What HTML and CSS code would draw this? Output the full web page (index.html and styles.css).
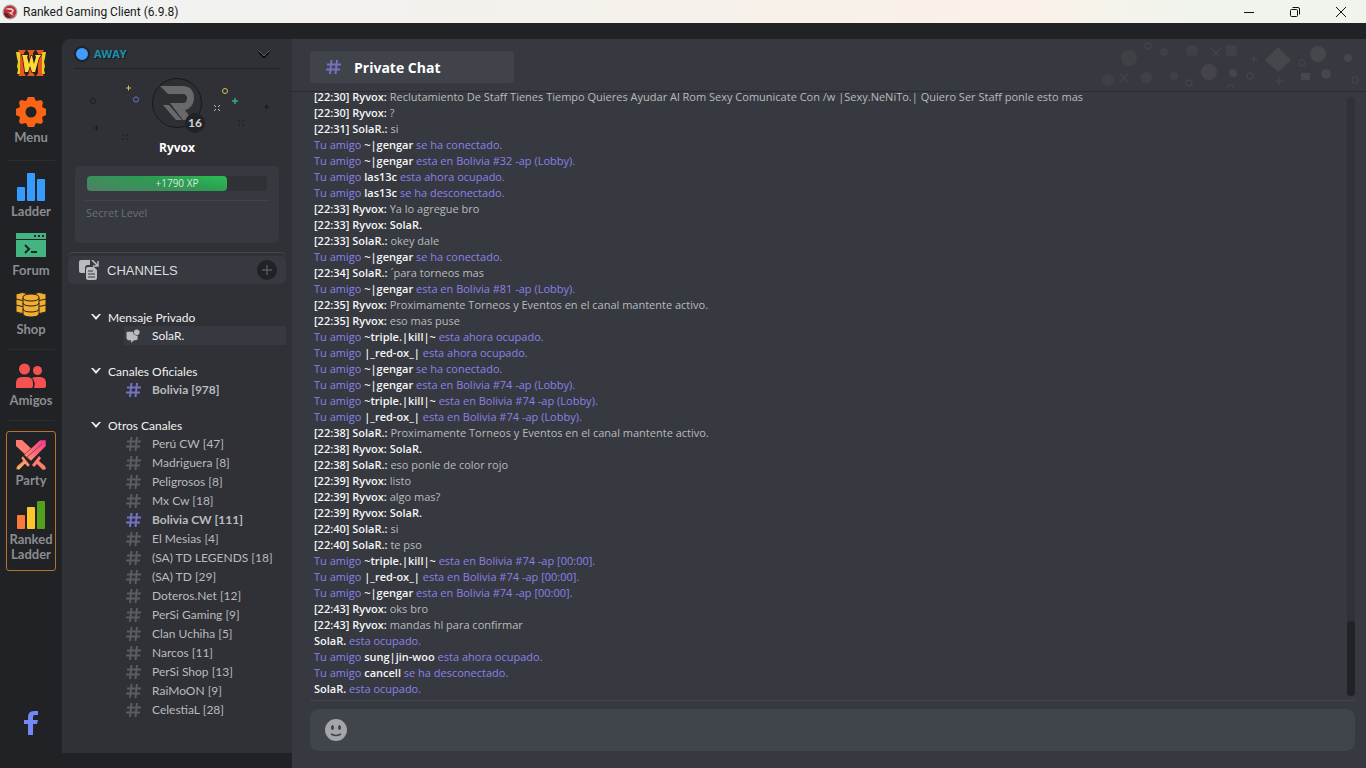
FILE: index.html
```html
<!DOCTYPE html>
<html lang="es">
<head>
    <meta charset="UTF-8">
    <meta name="viewport" content="width=device-width, initial-scale=1.0">
    <title>Ranked Gaming Client (6.9.8)</title>
    <link rel="stylesheet" href="styles.css">
</head>
<body>
    <!-- Icons used more than once -->
    <svg class="sprite" aria-hidden="true">
        <symbol id="hash" viewBox="0 0 15 14"><path d="M5.5 0 4 14M11 0 9.5 14M1 4.5h14M0 9.5h14" fill="none" stroke="currentColor" stroke-width="2"/></symbol>
        <symbol id="chevron" viewBox="0 0 10 6"><path d="M0 0h2l3 3 3-3h2L5 6z" fill="currentColor"/></symbol>
    </svg>

    <header class="titlebar">
        <svg class="app-icon" viewBox="0 0 16 16"><circle cx="8" cy="8" r="7.5" fill="#a9a3a3"/><circle cx="8" cy="8" r="6.2" fill="#b92f35"/><path d="M3 5q5-2 8 0 2 2-1 4l2 3-5-3H5l4-1c2-1 1-2-1-2z" fill="#e9c9c9"/><path d="M2 9c0 4 4 5.5 7 5L5 9z" fill="#5d2327"/></svg>
        <h1>Ranked Gaming Client (6.9.8)</h1>
        <div class="window-buttons">
            <button aria-label="Minimize"><svg viewBox="0 0 10 10"><path d="M0 5.5h10"/></svg></button>
            <button aria-label="Restore"><svg viewBox="0 0 10 10"><rect x=".5" y="2.5" width="7" height="7" rx="1"/><path d="M2.5.5H8q1.5 0 1.5 1.5v5.5"/></svg></button>
            <button aria-label="Close"><svg viewBox="0 0 10 10"><path d="m0 0 10 10M10 0 0 10"/></svg></button>
        </div>
    </header>

    <div class="app">
        <!-- Left rail -->
        <nav class="rail">
            <a href="#" class="logo" aria-label="Warcraft III">
                <svg viewBox="0 0 30 28"><path d="M0 3h5v22H1l1-4-1-4 1-4-1-4zM30 3h-5v22h4l-1-4 1-4-1-4 1-4z" fill="#e8cf22"/><path d="M2 1h8L8 4v20l2 3H2l2-3V4zM11 1h8l-2 3v20l2 3h-8l2-3V4zM20 1h8l-2 3v20l2 3h-8l2-3V4z" fill="#e65a1b"/><path d="M6 6h6l-1 2 2 7 2-8h1l2 8 2-7-1-2h6l-2 3-4 14h-3l-2-6-2 6H9L7 9z" fill="#ffd93a" stroke="#2c2014" stroke-width="1.5" paint-order="stroke"/></svg>
            </a>
            <a href="#" class="rail-item menu-item">
                <svg viewBox="0 0 30 30"><path d="M12 0h6l2 4 5-1 2 2-1 5 4 2v6l-4 2 1 5-2 2-5-1-2 4h-6l-2-4-5 1-2-2 1-5-4-2v-6l4-2-1-5 2-2 5 1z" fill="#fb6415"/><circle cx="15" cy="15" r="5.5" fill="#202226"/></svg>
                Menu
            </a>
            <hr>
            <a href="#" class="rail-item">
                <svg viewBox="0 0 30 30"><g fill="#359cff"><rect x="1" y="16" width="8" height="14" rx="1"/><rect x="11" y="2" width="8" height="28" rx="1"/><rect x="21" y="8" width="8" height="22" rx="1"/></g></svg>
                Ladder
            </a>
            <a href="#" class="rail-item">
                <svg viewBox="0 0 30 30"><path d="M0 3h30v6H0zM0 10h30v17H0z" fill="#43b581"/><path d="M18 5h2v2h-2zM22 5h2v2h-2zM26 5h2v2h-2z" fill="#202226"/><path d="m9 15 4 4-4 4M15 22h6" fill="none" stroke="#202226" stroke-width="2"/></svg>
                Forum
            </a>
            <a href="#" class="rail-item">
                <svg viewBox="0 0 30 30"><g fill="#f2ae2c" stroke="#202226"><path d="M0 5q6-3 13 0v18q-7 3-13 0zM17 5q6-3 13 0v18q-7 3-13 0z"/><path d="M0 10q6 3 13 0M0 16q6 3 13 0M17 10q6 3 13 0M17 16q6 3 13 0" fill="none"/><path d="M7 8c0-4 16-4 16 0v17c0 4-16 4-16 0z"/><path d="M7 9c0 4 16 4 16 0M7 14c0 4 16 4 16 0M7 20c0 4 16 4 16 0" fill="none"/></g></svg>
                Shop
            </a>
            <hr>
            <a href="#" class="rail-item">
                <svg viewBox="0 0 30 30"><g fill="#f45151"><circle cx="8.5" cy="9" r="5.5"/><circle cx="21.5" cy="10.5" r="4.5"/><path d="M0 28v-5q0-6 6-6h5q6 0 6 6v3q0 2-2 2zM18 28q2-6-2-10 2-1 4-1h4q6 0 6 6v3q0 2-2 2z"/></g></svg>
                Amigos
            </a>
            <hr>
            <div class="ranked-box">
                <a href="#" class="rail-item">
                    <svg viewBox="0 0 30 30">
                        <defs><linearGradient id="blade" x1="0" y1="1" x2="1" y2="0"><stop offset="0" stop-color="#ffb35c"/><stop offset=".5" stop-color="#ff7b73"/><stop offset="1" stop-color="#f8358f"/></linearGradient></defs>
                        <path d="M0 0h6l15 14-6 6L0 6zM23 16l2 2-2 3 6 5 1 3-3 1-6-6-3 3-2-2z" fill="#ff7b70"/>
                        <path d="M30 0h-6L8 15l7 6L30 6zM7 16l-2 2 2 3-6 5-1 3 3 1 6-6 3 3 2-2z" fill="url(#blade)" stroke="#202226" stroke-width=".5"/>
                        <path d="m11 17 15-13" stroke="#9b3b58"/>
                    </svg>
                    Party
                </a>
                <a href="#" class="rail-item">
                    <svg viewBox="0 0 30 30"><rect x="1" y="16" width="8" height="14" rx="1" fill="#fb7a38"/><rect x="11" y="8" width="8" height="22" rx="1" fill="#fcc52c"/><rect x="21" y="2" width="8" height="28" rx="1" fill="#51a11d"/></svg>
                    Ranked<br>Ladder
                </a>
            </div>
            <a href="#" class="facebook" aria-label="Facebook">
                <svg viewBox="0 0 14 24"><path d="M14 0v4h-3q-2 0-2 2v3h5l-1 4H9v11H4V13H0V9h4V6q0-6 6-6z" fill="#7387f5"/></svg>
            </a>
        </nav>

        <!-- Profile and channels -->
        <aside class="sidebar">
            <button class="status">
                <span class="status-dot"></span>AWAY
                <svg viewBox="0 0 12 8"><path d="m1 2 5 5 5-5" fill="none" stroke="#08090a" stroke-width="2"/><path d="m1 1 5 5 5-5" fill="none" stroke="#65686c"/></svg>
            </button>
            <section class="profile">
                <div class="profile-art">
                    <svg class="confetti" viewBox="0 0 210 70" fill="none">
                        <g stroke="#191b1e"><circle cx="21" cy="32" r="2.5"/><path d="M22 59h5M24.5 56.5v5M192 38h5M194.5 35.5v5M50 65l2 2m2 2 2 2m0-6-2 2m-2 2-2 2M166 51l2 2m2 2 2 2m0-6-2 2m-2 2-2 2"/></g>
                        <path d="M54 19h5M56.5 16.5v5" stroke="#d4c34d"/><circle cx="64" cy="30.5" r="2.5" stroke="#6d78d0"/><circle cx="153" cy="22" r="2.500" stroke="#d4c34d"/><path d="M160 32h6M163 29v6" stroke="#38a985" stroke-width="1.5"/><path d="m142 36 2 2m2 2 2 2m0-6-2 2m-2 2-2 2" stroke="#b8bbc0"/>
                    </svg>
                    <div class="avatar">
                        <svg viewBox="0 0 50 50"><circle cx="25" cy="25" r="24.5" fill="#2d2f33" stroke="#17191b"/><path d="M8 8h24q10 1 10 13-1 9-9 11l7 10h-9L18 25h13q4 0 4-5 0-4-5-4H16zM11 27h6l13 15h-6z" fill="#67696c"/></svg>
                        <span class="level">16</span>
                    </div>
                </div>
                <h2>Ryvox</h2>
                <div class="xp-card">
                    <div class="xp-track"><div class="xp-fill"></div><span>+1790 XP</span></div>
                    <p>Secret Level</p>
                </div>
            </section>

            <div class="channels-head">
                <svg viewBox="0 0 20 20"><path d="M2 0h9v5H9q-3 0-3 3v5H2q-2 0-2-2V2q0-2 2-2z" fill="#b9bbbe"/><path d="M9 7h6l3 3v8q0 2-2 2H9q-2 0-2-2V9q0-2 2-2z" fill="#b9bbbe"/><path d="M9 11h5M9 14h7M9 17h7" stroke="#36393f"/><path d="m13 0 5 5m1-4v5h-5" fill="none" stroke="#b9bbbe" stroke-width="1.5"/></svg>
                <h2>CHANNELS</h2>
                <button aria-label="Add channel"><svg viewBox="0 0 10 10"><path d="M5 0v10M0 5h10" stroke="#54575c" stroke-width="1.5"/></svg></button>
            </div>

            <div class="channel-groups">
                <section>
                    <h3><svg><use href="#chevron"/></svg>Mensaje Privado</h3>
                    <ul>
                        <li><a href="#" class="selected"><svg viewBox="0 0 15 15"><path d="M1 3h6a4 4 0 0 0 5 4v3q0 2-2 2H8l-3 3v-3H3q-3 0-3-3V4q0-1 1-1z" fill="#b9bbbe"/><circle cx="11" cy="3.5" r="3" fill="#b9bbbe"/></svg>SolaR.</a></li>
                    </ul>
                </section>
                <section>
                    <h3><svg><use href="#chevron"/></svg>Canales Oficiales</h3>
                    <ul>
                        <li><a href="#" class="unread"><svg><use href="#hash"/></svg>Bolivia [978]</a></li>
                    </ul>
                </section>
                <section>
                    <h3><svg><use href="#chevron"/></svg>Otros Canales</h3>
                    <ul>
                        <li><a href="#"><svg><use href="#hash"/></svg>Perú CW [47]</a></li>
                        <li><a href="#"><svg><use href="#hash"/></svg>Madriguera [8]</a></li>
                        <li><a href="#"><svg><use href="#hash"/></svg>Peligrosos [8]</a></li>
                        <li><a href="#"><svg><use href="#hash"/></svg>Mx Cw [18]</a></li>
                        <li><a href="#" class="unread"><svg><use href="#hash"/></svg>Bolivia CW [111]</a></li>
                        <li><a href="#"><svg><use href="#hash"/></svg>El Mesias [4]</a></li>
                        <li><a href="#"><svg><use href="#hash"/></svg>(SA) TD LEGENDS [18]</a></li>
                        <li><a href="#"><svg><use href="#hash"/></svg>(SA) TD [29]</a></li>
                        <li><a href="#"><svg><use href="#hash"/></svg>Doteros.Net [12]</a></li>
                        <li><a href="#"><svg><use href="#hash"/></svg>PerSi Gaming [9]</a></li>
                        <li><a href="#"><svg><use href="#hash"/></svg>Clan Uchiha [5]</a></li>
                        <li><a href="#"><svg><use href="#hash"/></svg>Narcos [11]</a></li>
                        <li><a href="#"><svg><use href="#hash"/></svg>PerSi Shop [13]</a></li>
                        <li><a href="#"><svg><use href="#hash"/></svg>RaiMoON [9]</a></li>
                        <li><a href="#"><svg><use href="#hash"/></svg>CelestiaL [28]</a></li>
                    </ul>
                </section>
            </div>
        </aside>

        <!-- Chat -->
        <main class="chat">
            <div class="chat-head">
                <div class="chat-title"><svg><use href="#hash"/></svg><h2>Private Chat</h2></div>
                <svg class="shapes" viewBox="0 0 266 52">
                    <g fill="#3f4147"><circle cx="29" cy="19" r="8"/><circle cx="8" cy="41" r="6"/><circle cx="46" cy="39" r="6"/><circle cx="64" cy="13" r="4"/><circle cx="92" cy="12" r="6"/><circle cx="74" cy="37" r="4"/><rect x="126" y="6" width="11" height="11" rx="2"/></g>
                    <g fill="#46474a"><circle cx="109" cy="33" r="8" fill="#45424b"/><circle cx="133" cy="34" r="4"/><path d="m178 8 13 13-13 12-13-12z"/><circle cx="218" cy="15" r="8"/><circle cx="226" cy="35" r="5"/><circle cx="248" cy="19" r="4"/><path d="M201 34h9v7h-9z"/></g>
                    <g fill="none" stroke="#414349" stroke-width="1.5"><path d="M150 20h8m-4-4v8M175 42h8m-4-4v8M112 10l8 8m0-8-8 8M20 35l8 8m0-8-8 8"/><circle cx="202" cy="24" r="3"/><circle cx="150" cy="37" r="3"/><circle cx="89" cy="44" r="3"/><circle cx="48" cy="7" r="3"/><circle cx="255" cy="41" r="3"/><path d="M127 49a3 3 0 0 1 6 0"/></g>
                </svg>
            </div>

            <div class="messages">
                <div class="log">
                    <p><b>[22:30] Ryvox:</b> Reclutamiento De Staff Tienes Tiempo Quieres Ayudar Al Rom Sexy Comunicate Con /w |Sexy.NeNiTo.| Quiero Ser Staff ponle esto mas</p>
                    <p><b>[22:30] Ryvox:</b> ?</p>
                    <p><b>[22:31] SolaR.:</b> si</p>
                    <p class="notice">Tu amigo <b>~|gengar</b> se ha conectado.</p>
                    <p class="notice">Tu amigo <b>~|gengar</b> esta en Bolivia #32 -ap (Lobby).</p>
                    <p class="notice">Tu amigo <b>las13c</b> esta ahora ocupado.</p>
                    <p class="notice">Tu amigo <b>las13c</b> se ha desconectado.</p>
                    <p><b>[22:33] Ryvox:</b> Ya lo agregue bro</p>
                    <p><b>[22:33] Ryvox: SolaR.</b></p>
                    <p><b>[22:33] SolaR.:</b> okey dale</p>
                    <p class="notice">Tu amigo <b>~|gengar</b> se ha conectado.</p>
                    <p><b>[22:34] SolaR.:</b> ´para torneos mas</p>
                    <p class="notice">Tu amigo <b>~|gengar</b> esta en Bolivia #81 -ap (Lobby).</p>
                    <p><b>[22:35] Ryvox:</b> Proximamente Torneos y Eventos en el canal mantente activo.</p>
                    <p><b>[22:35] Ryvox:</b> eso mas puse</p>
                    <p class="notice">Tu amigo <b>~triple.|kill|~</b> esta ahora ocupado.</p>
                    <p class="notice">Tu amigo <b>|_red-ox_|</b> esta ahora ocupado.</p>
                    <p class="notice">Tu amigo <b>~|gengar</b> se ha conectado.</p>
                    <p class="notice">Tu amigo <b>~|gengar</b> esta en Bolivia #74 -ap (Lobby).</p>
                    <p class="notice">Tu amigo <b>~triple.|kill|~</b> esta en Bolivia #74 -ap (Lobby).</p>
                    <p class="notice">Tu amigo <b>|_red-ox_|</b> esta en Bolivia #74 -ap (Lobby).</p>
                    <p><b>[22:38] SolaR.:</b> Proximamente Torneos y Eventos en el canal mantente activo.</p>
                    <p><b>[22:38] Ryvox: SolaR.</b></p>
                    <p><b>[22:38] SolaR.:</b> eso ponle de color rojo</p>
                    <p><b>[22:39] Ryvox:</b> listo</p>
                    <p><b>[22:39] Ryvox:</b> algo mas?</p>
                    <p><b>[22:39] Ryvox: SolaR.</b></p>
                    <p><b>[22:40] SolaR.:</b> si</p>
                    <p><b>[22:40] SolaR.:</b> te pso</p>
                    <p class="notice">Tu amigo <b>~triple.|kill|~</b> esta en Bolivia #74 -ap [00:00].</p>
                    <p class="notice">Tu amigo <b>|_red-ox_|</b> esta en Bolivia #74 -ap [00:00].</p>
                    <p class="notice">Tu amigo <b>~|gengar</b> esta en Bolivia #74 -ap [00:00].</p>
                    <p><b>[22:43] Ryvox:</b> oks bro</p>
                    <p><b>[22:43] Ryvox:</b> mandas hl para confirmar</p>
                    <p class="notice"><b>SolaR.</b> esta ocupado.</p>
                    <p class="notice">Tu amigo <b>sung|jin-woo</b> esta ahora ocupado.</p>
                    <p class="notice">Tu amigo <b>cancell</b> se ha desconectado.</p>
                    <p class="notice"><b>SolaR.</b> esta ocupado.</p>
                </div>
                <div class="scrollbar"><div class="thumb"></div></div>
            </div>

            <form class="composer">
                <button type="button" aria-label="Emoji"><svg viewBox="0 0 22 22"><circle cx="11" cy="11" r="11" fill="#a3a5a8"/><ellipse cx="7.5" cy="8.5" rx="1.5" ry="2.5" fill="#40444b"/><ellipse cx="14.5" cy="8.5" rx="1.5" ry="2.5" fill="#40444b"/><path d="M6 15q5 3 10 0" fill="none" stroke="#40444b" stroke-width="1.5"/></svg></button>
                <input type="text" aria-label="Message">
            </form>
        </main>
    </div>
</body>
</html>
```
FILE: styles.css
```css
* {
    box-sizing: border-box;
}
body {
    margin: 0;
    height: 100vh;
    display: flex;
    flex-direction: column;
    overflow: hidden;
    background-color: #202226;
    color: #b9bbbe;
    font-family: "Open Sans", "Noto Sans", sans-serif;
    font-size: 11px;
}
h1, h2, h3, p, ul {
    margin: 0;
    padding: 0;
    list-style: none;
}
a {
    color: inherit;
    text-decoration: none;
}
button {
    padding: 0;
    border: none;
    background: none;
    color: inherit;
    font: inherit;
    cursor: pointer;
}
svg {
    display: block;
    flex: none;
}
.sprite {
    position: absolute;
    width: 0;
    height: 0;
}

/* Window title */
.titlebar {
    display: flex;
    align-items: center;
    height: 23px;
    flex: none;
    padding-left: 2px;
    background: linear-gradient(90deg, #f0f3f1, #f3f1ed 30%, #faf1e8 75%, #f0f4ed 88%);
    color: #191919;
}
.app-icon {
    width: 16px;
    height: 16px;
    margin-right: 5px;
}
.titlebar h1 {
    font-size: 12px;
    font-weight: 400;
    font-family: Roboto, sans-serif;
}
.window-buttons {
    display: flex;
    margin-left: auto;
    padding-right: 2px;
}
.window-buttons button {
    display: flex;
    align-items: center;
    justify-content: center;
    width: 46px;
    height: 20px;
}
.window-buttons svg {
    width: 10px;
    height: 10px;
    fill: none;
    stroke: #111;
}

.app {
    display: flex;
    flex: 1;
    min-height: 0;
    padding-top: 16px;
}

/* Left rail */
.rail {
    display: flex;
    flex-direction: column;
    align-items: center;
    width: 62px;
    flex: none;
    padding: 10px 6px 33px;
    font-family: Lato, sans-serif;
    font-size: 13px;
    font-weight: 700;
    line-height: 15px;
    color: #8b8d90;
    text-align: center;
}
.rail hr {
    width: 48px;
    margin: 1px 0 10px;
    border: none;
    border-top: 1px solid #2b2d31;
}
.logo svg {
    width: 30px;
    height: 28px;
}
.rail-item {
    display: flex;
    flex-direction: column;
    align-items: center;
    gap: 3px;
    margin-bottom: 11px;
}
.rail-item svg {
    width: 30px;
    height: 30px;
}
.menu-item {
    margin: 20px 0 14px;
}
.ranked-box {
    width: 50px;
    padding: 8px 0;
    border: 1px solid #b5732b;
    border-radius: 3px;
}
.ranked-box .rail-item:last-child {
    margin: 0;
}
.facebook {
    margin-top: auto;
}
.facebook svg {
    width: 14px;
    height: 24px;
}

/* Sidebar */
.sidebar {
    width: 230px;
    flex: none;
    margin-bottom: 15px;
    padding: 0 6px;
    background-color: #2f3136;
    border-top-left-radius: 8px;
}
.status {
    display: flex;
    align-items: center;
    width: calc(100% - 12px);
    height: 30px;
    margin-left: 6px;
    border-bottom: 1px solid #202226;
    color: #1d91b0;
    font-weight: 700;
    text-shadow: 1px 1px #15181b;
}
.status-dot {
    width: 16px;
    height: 16px;
    margin-right: 4px;
    border: 2px solid #202226;
    border-radius: 50%;
    background-color: #409cff;
}
.status svg {
    width: 12px;
    height: 8px;
    margin: 0 10px 0 auto;
}
.profile-art {
    position: relative;
    height: 70px;
}
.confetti {
    position: absolute;
    left: 4px;
    top: 0;
    width: 210px;
    height: 70px;
    overflow: visible;
}
.avatar {
    position: relative;
    width: 50px;
    margin: 0 auto;
    padding-top: 9px;
}
.avatar svg {
    width: 50px;
    height: 50px;
}
.level {
    position: absolute;
    right: -3px;
    bottom: -5px;
    width: 20px;
    height: 20px;
    border-radius: 50%;
    background-color: #202226;
    color: #d3d4d6;
    font: 700 12px/20px Lato, sans-serif;
    text-align: center;
}
.profile h2 {
    color: #fff;
    font-size: 12px;
    line-height: 18px;
    text-align: center;
}
.xp-card {
    height: 77px;
    margin: 9px 7px 10px;
    padding: 10px;
    border-radius: 5px;
    background-color: #36393f;
}
.xp-track {
    position: relative;
    height: 15px;
    margin: 0 2px;
    border-radius: 4px;
    background-color: #2f3136;
    color: #d5e8da;
    font-size: 10px;
    line-height: 15px;
    text-align: center;
}
.xp-track span {
    position: relative;
}
.xp-fill {
    position: absolute;
    width: 78%;
    height: 100%;
    border-radius: 4px;
    background: linear-gradient(10deg, #4f8064, #2d9b53 60%, #2dbd55);
}
.xp-card p {
    margin-top: 9px;
    padding: 4px 1px;
    border-top: 1px solid #41444a;
    color: #6c6f74;
    font-size: 11px;
}
.channels-head {
    display: flex;
    align-items: center;
    height: 28px;
    margin-top: 13px;
    padding: 0 9px 0 11px;
    border-radius: 5px;
    background-color: #36393f;
    box-shadow: 0 -3px #2f3136, 0 -4px #43454a;
}
.channels-head > svg {
    width: 20px;
    height: 20px;
}
.channels-head h2 {
    margin-left: 8px;
    color: #dcddde;
    font: 400 13px "Liberation Sans", Arial, sans-serif;
}
.channels-head button {
    display: grid;
    place-items: center;
    width: 20px;
    height: 20px;
    margin-left: auto;
    border-radius: 50%;
    background-color: #202226;
}
.channels-head button svg {
    width: 10px;
    height: 10px;
}
.channel-groups {
    display: flex;
    flex-direction: column;
    gap: 17px;
    padding-top: 24px;
    font-family: Lato, sans-serif;
    font-size: 12px;
}
.channel-groups h3 {
    display: flex;
    align-items: center;
    gap: 7px;
    height: 18px;
    padding-left: 23px;
    color: #f0f1f2;
    font-size: 12px;
    font-weight: 400;
}
.channel-groups h3 svg {
    width: 10px;
    height: 6px;
}
.channel-groups li a {
    display: flex;
    align-items: center;
    gap: 11px;
    height: 19px;
    margin-left: 56px;
    padding-left: 2px;
}
.channel-groups li svg {
    width: 15px;
    height: 14px;
    color: #5a5c61;
}
.channel-groups .selected {
    background-color: #36393f;
    color: #f0f1f2;
}
.channel-groups .unread {
    font-weight: 700;
}
.channel-groups .unread svg,
.chat-title svg {
    color: #7572c4;
}

/* Chat */
.chat {
    display: flex;
    flex-direction: column;
    flex: 1;
    min-width: 0;
    padding-bottom: 17px;
    background-color: #36393f;
}
.chat-head {
    display: flex;
    align-items: center;
    justify-content: space-between;
    height: 53px;
    flex: none;
    padding-left: 18px;
    border-bottom: 1px solid #292b30;
}
.chat-title {
    display: flex;
    align-items: center;
    gap: 13px;
    width: 204px;
    height: 32px;
    margin-top: 4px;
    padding-left: 16px;
    border-radius: 4px;
    background-color: #40434a;
}
.chat-title svg {
    width: 15px;
    height: 14px;
}
.chat-title h2 {
    color: #fff;
    font-size: 14px;
}
.shapes {
    width: 266px;
    height: 52px;
}
.messages {
    display: flex;
    flex: 1;
    min-height: 0;
    margin: 0 11px 0 18px;
    border-bottom: 1px solid #43464c;
}
.log {
    display: flex;
    flex-direction: column;
    justify-content: flex-end;
    flex: 1;
    min-width: 0;
    overflow: hidden;
    padding: 0 4px 3px;
    line-height: 16px;
}
.log b {
    color: #f5f5f6;
    font-weight: 600;
}
.notice {
    color: #8c80ec;
}
.scrollbar {
    display: flex;
    align-items: flex-end;
    width: 8px;
    margin: 5px 0 4px;
    border-radius: 4px;
    background-color: #2f3237;
}
.thumb {
    width: 8px;
    height: 75px;
    border-radius: 4px;
    background-color: #202226;
}
.composer {
    display: flex;
    align-items: center;
    height: 42px;
    flex: none;
    margin: 8px 11px 0 18px;
    padding: 0 15px;
    border-radius: 9px;
    background-color: #40444b;
}
.composer svg {
    width: 22px;
    height: 22px;
}
.composer input {
    flex: 1;
    margin-left: 12px;
    border: none;
    outline: none;
    background: none;
    color: #dcddde;
    font: inherit;
}
```
